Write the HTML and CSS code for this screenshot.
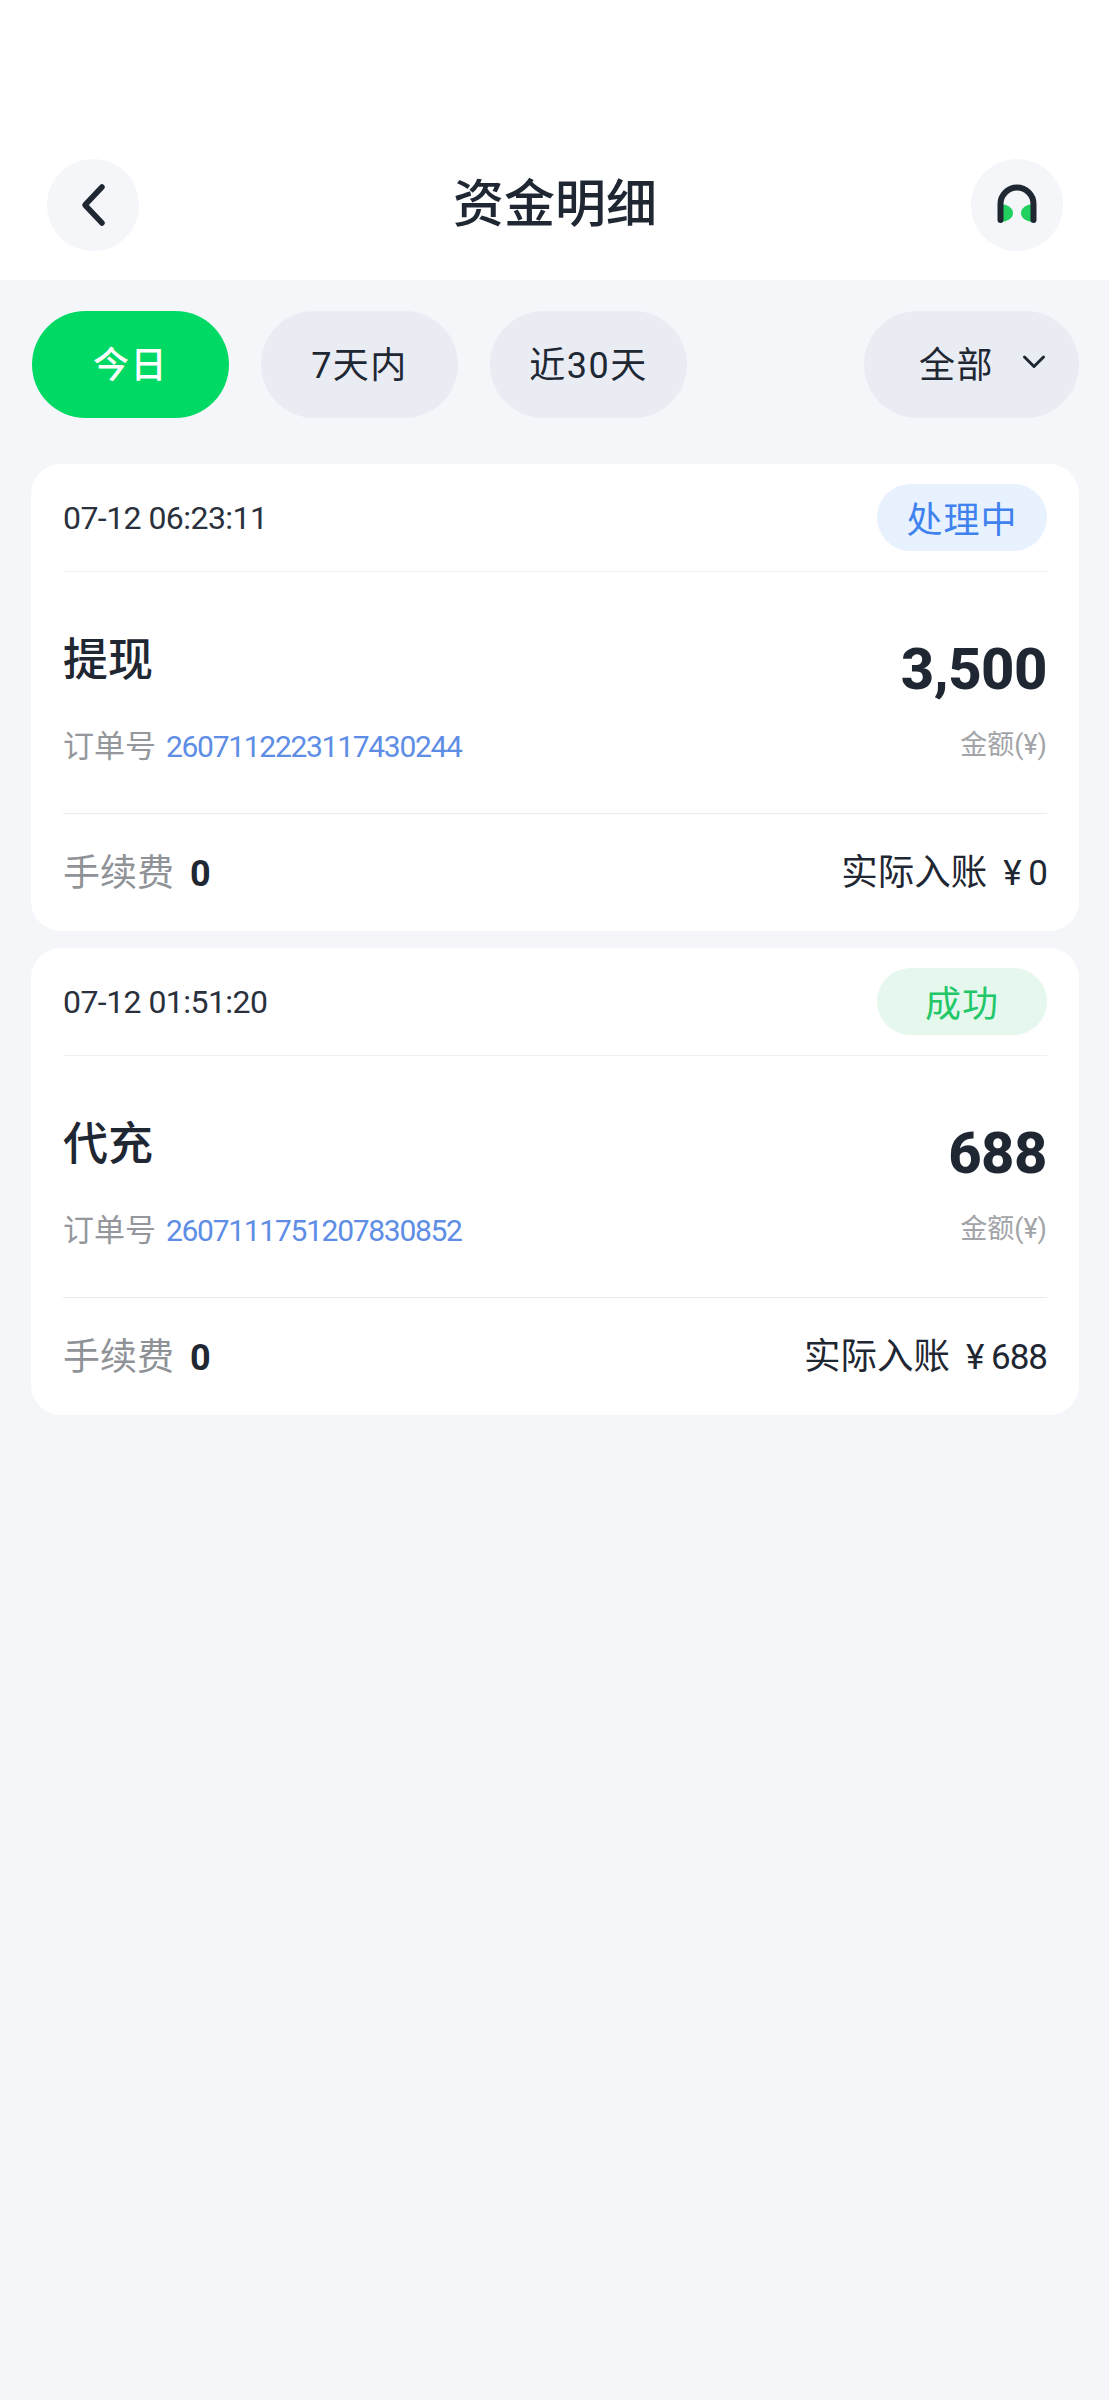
FILE: index.html
```html
<!doctype html>
<html>
<head>
    <title>资金明细</title>
    <meta charset="utf-8" />
    <meta name="viewport" content="width=device-width, initial-scale=1" />
    <link rel="stylesheet" href="styles.css">
</head>
<body>

<header class="top-bar">
    <button class="round-btn">
        <svg width="92" height="92" viewBox="0 0 92 92">
            <path d="M55 28 L38 46 L55 64" fill="none" stroke="#1f2733" stroke-width="5.5" stroke-linecap="round" stroke-linejoin="round"/>
        </svg>
    </button>
    <h1 class="page-title">资金明细</h1>
    <button class="round-btn">
        <svg width="92" height="92" viewBox="0 0 92 92">
            <path d="M30 45 A12 9 0 0 1 30 63 Z" fill="#22d05f"/>
            <path d="M62 45 A12 9 0 0 0 62 63 Z" fill="#22d05f"/>
            <path d="M29.5 61 V45 A16.5 16.5 0 0 1 62.5 45 V61" fill="none" stroke="#1f2733" stroke-width="6" stroke-linecap="round"/>
        </svg>
    </button>
</header>

<section class="filters">
    <div class="pill pill-active">今日</div>
    <div class="pill">7天内</div>
    <div class="pill">近30天</div>
    <div class="pill pill-select">
        <span>全部</span>
        <svg width="24" height="16" viewBox="0 0 24 16">
            <path d="M2.5 3 L12 12.5 L21.5 3" fill="none" stroke="#1f2733" stroke-width="3" stroke-linecap="round" stroke-linejoin="round"/>
        </svg>
    </div>
</section>

<main class="records">
    <article class="card">
        <div class="card-head">
            <span class="time">07-12 06:23:11</span>
            <span class="badge badge-pending">处理中</span>
        </div>
        <div class="card-body">
            <div>
                <div class="kind">提现</div>
                <div class="order"><span class="order-label">订单号</span><span class="order-no">2607112223117430244</span></div>
            </div>
            <div class="amount-col">
                <div class="amount">3,500</div>
                <div class="amount-label">金额(¥)</div>
            </div>
        </div>
        <div class="card-foot">
            <div><span class="fee-label">手续费</span><span class="fee">0</span></div>
            <div class="received">实际入账<span class="received-val">¥ 0</span></div>
        </div>
    </article>

    <article class="card">
        <div class="card-head">
            <span class="time">07-12 01:51:20</span>
            <span class="badge badge-ok">成功</span>
        </div>
        <div class="card-body">
            <div>
                <div class="kind">代充</div>
                <div class="order"><span class="order-label">订单号</span><span class="order-no">2607111751207830852</span></div>
            </div>
            <div class="amount-col">
                <div class="amount">688</div>
                <div class="amount-label">金额(¥)</div>
            </div>
        </div>
        <div class="card-foot">
            <div><span class="fee-label">手续费</span><span class="fee">0</span></div>
            <div class="received">实际入账<span class="received-val">¥ 688</span></div>
        </div>
    </article>
</main>

</body>
</html>
```

FILE: styles.css
```css
*{
    box-sizing: border-box;
}

body{
    margin: 0;
    min-height: 2400px;
    background-color: #f4f6fa;
    color: #1f2733;
    font-family: Roboto, "Noto Sans CJK SC", sans-serif;
}

.top-bar{
    display: flex;
    align-items: center;
    justify-content: space-between;
    height: 280px;
    padding: 159px 46px 29px 47px;
    background-color: #fff;
}

.round-btn{
    width: 92px;
    height: 92px;
    padding: 0;
    border: none;
    border-radius: 50%;
    background-color: #f4f6fa;
}

.round-btn svg{
    display: block;
}

.page-title{
    margin: 0;
    font-size: 51px;
    font-weight: 500;
    line-height: 92px;
}

.filters{
    display: flex;
    gap: 32px;
    padding: 31px 30px 0 32px;
}

.pill{
    display: flex;
    align-items: center;
    justify-content: center;
    width: 197px;
    height: 107px;
    padding-bottom: 5px;
    border-radius: 54px;
    background-color: #e9ecf3;
    font-size: 36px;
    letter-spacing: 1.5px;
}

.pill-active{
    background-color: #00d964;
    color: #fff;
    font-weight: 500;
}

.pill-select{
    gap: 28px;
    width: 215px;
    margin-left: auto;
    padding-left: 22px;
}

.records{
    display: flex;
    flex-direction: column;
    gap: 17px;
    padding: 46px 30px 0 31px;
}

.card{
    height: 467px;
    padding: 0 32px;
    border-radius: 30px;
    background-color: #fff;
}

.card-head{
    display: flex;
    align-items: center;
    justify-content: space-between;
    height: 108px;
    border-bottom: 1px solid #eef0f3;
}

.time{
    color: #2a313c;
    font-size: 32px;
    letter-spacing: -0.55px;
}

.badge{
    display: flex;
    align-items: center;
    justify-content: center;
    width: 170px;
    height: 67px;
    padding-bottom: 2px;
    border-radius: 34px;
    font-size: 36px;
    letter-spacing: 1px;
}

.badge-pending{
    background-color: #e8f1fe;
    color: #3f82ef;
}

.badge-ok{
    background-color: #e6f8ee;
    color: #22c768;
}

.card-body{
    display: flex;
    justify-content: space-between;
    height: 242px;
    border-bottom: 1px solid #e9ebee;
}

.kind{
    margin-top: 59px;
    font-size: 45px;
    font-weight: 500;
    line-height: 60px;
}

.order{
    margin-top: 36px;
    line-height: 40px;
}

.order-label{
    margin-right: 10px;
    color: #94979c;
    font-size: 31px;
}

.order-no{
    color: #5e8de6;
    font-size: 30px;
    letter-spacing: -1.3px;
}

.amount-col{
    text-align: right;
}

.amount{
    margin-top: 62px;
    font-size: 58px;
    font-weight: 800;
    line-height: 70px;
    letter-spacing: -0.5px;
}

.amount-label{
    margin-top: 21px;
    color: #a2a4a8;
    font-size: 27px;
    line-height: 40px;
}

.card-foot{
    display: flex;
    align-items: center;
    justify-content: space-between;
    height: 117px;
    padding-bottom: 6px;
}

.fee-label{
    color: #8f9297;
    font-size: 37px;
}

.fee{
    margin-left: 16px;
    font-size: 36px;
    font-weight: 700;
}

.received{
    font-size: 36.5px;
}

.received-val{
    margin-left: 16px;
    font-size: 35px;
    letter-spacing: -1px;
}
```
